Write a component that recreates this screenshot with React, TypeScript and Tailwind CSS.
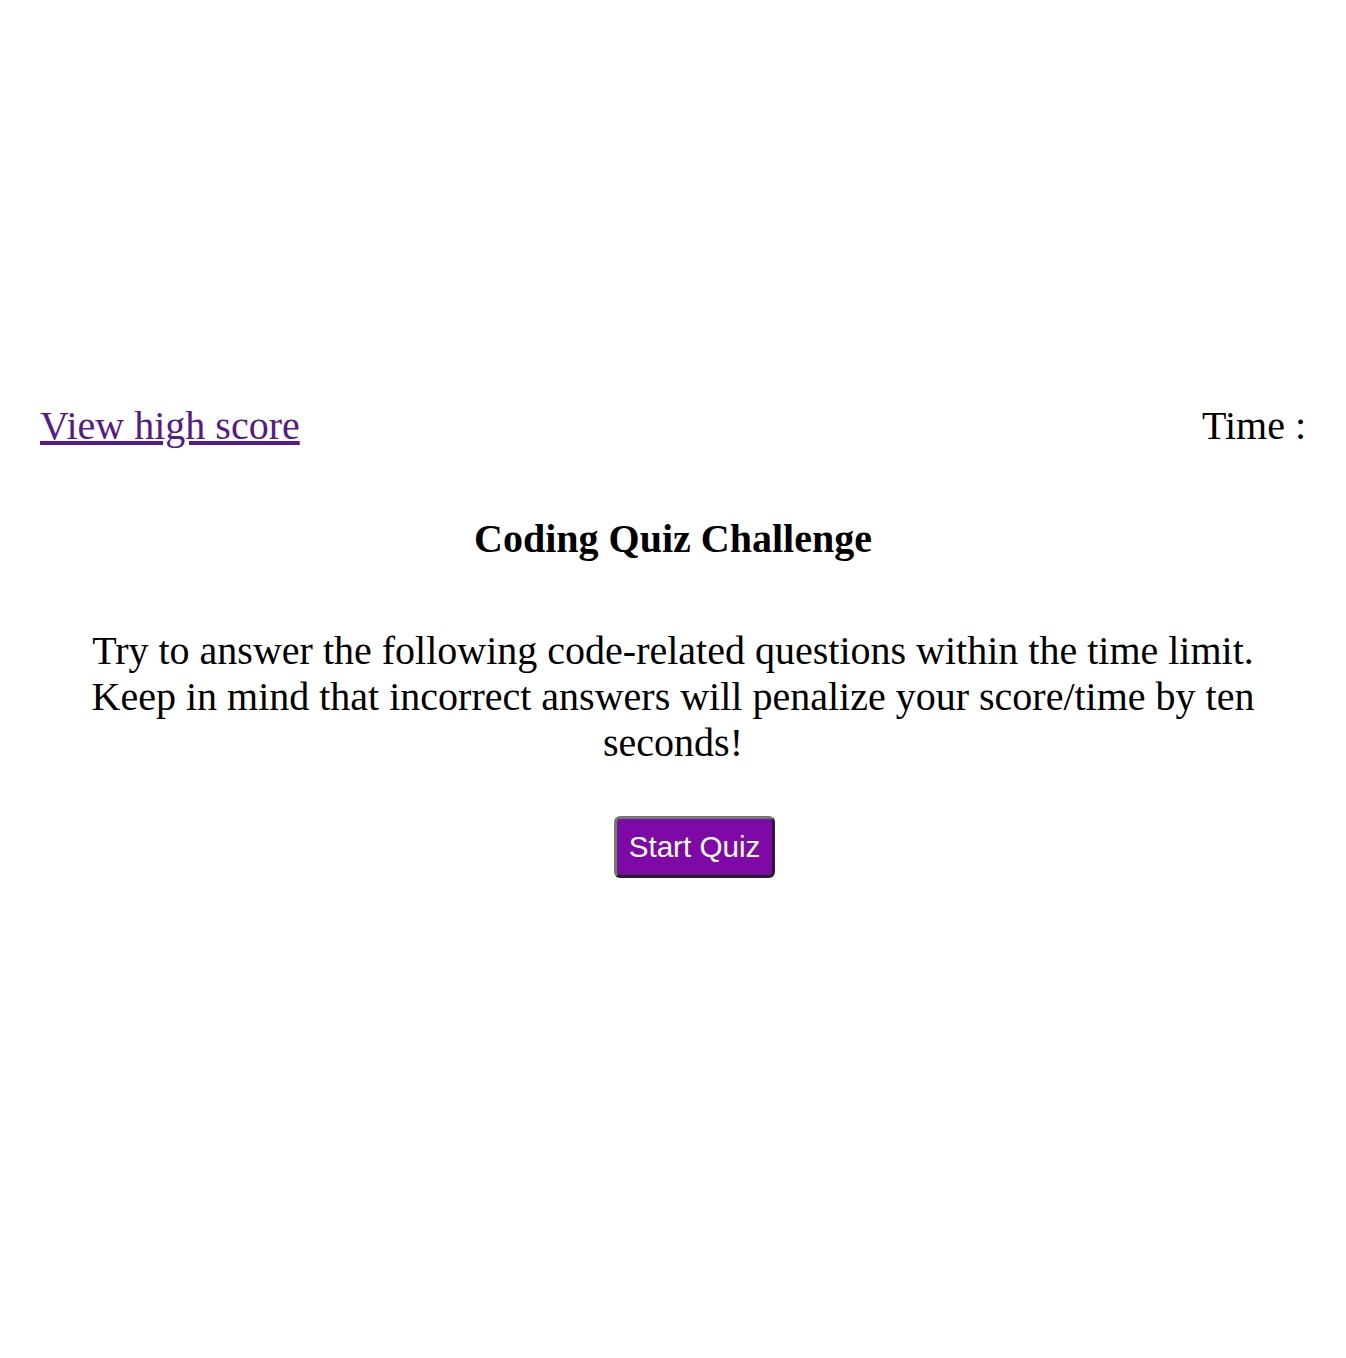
import React from "react";

export default function App() {
  return (
    <div
      className="w-full min-h-[1358px] bg-white text-black pt-[403px]"
      style={{ fontFamily: '"Liberation Serif", "Times New Roman", serif' }}
    >
      <header className="flex justify-between items-start px-[40px] text-[40px] leading-[46px]">
        <a href="#" className="text-[#551a8b] underline">
          View high score
        </a>
        <div>Time :</div>
      </header>
      <h1 className="mt-[67px] text-center text-[40px] leading-[46px] font-bold">
        Coding Quiz Challenge
      </h1>
      <p className="mt-[66px] px-[80px] text-center text-[40px] leading-[46px]">
        Try to answer the following code-related questions within the time limit. Keep in mind that incorrect answers will penalize your score/time by ten seconds!
      </p>
      <div className="mt-[50px] flex justify-center">
        <button
          className="ml-[43px] bg-[#7f09a6] text-white text-[29.6px] leading-[34px] px-[12px] pt-[11px] pb-[11px] rounded-[6px] border-[3px] border-t-[#767676] border-l-[#767676] border-b-[#222222] border-r-[#222222]"
          style={{ fontFamily: '"Liberation Sans", Arial, sans-serif' }}
        >
          Start Quiz
        </button>
      </div>
    </div>
  );
}
